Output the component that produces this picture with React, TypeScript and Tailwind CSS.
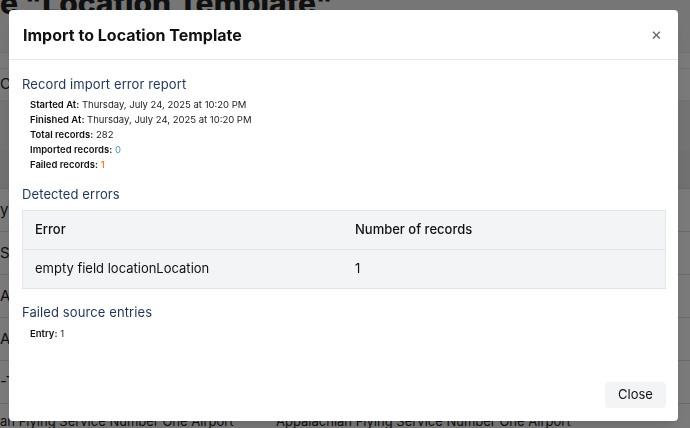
import { FC } from "react";

const font = { fontFamily: "Inter, 'Noto Sans', sans-serif" };

const rows = [
  "y Paper Lane",
  "Storage Unit",
  "Airport Hangar",
  "Airport Tower",
  "-Terminal",
];

const Background: FC = () => (
  <div className="w-[690px] h-[428px] overflow-hidden bg-white text-[#222]">
    {/* heading */}
    <div className="h-[52px] bg-[#f6f6f6] overflow-hidden">
      <h1 className="text-[30px] font-extrabold leading-none whitespace-nowrap -mt-[12px]">e "Location Template"</h1>
    </div>
    <div className="h-[16px] border-t border-[#e6e6e6]"></div>
    <div className="h-[32px] border-t border-[#e6e6e6] flex items-center text-[15px]">Code</div>
    <div className="h-[50px] border-t border-[#ececec] bg-[#f0f0f0]"></div>
    <div className="h-[38px] bg-[#ececec] flex items-center text-[10px] pl-[16px]">▼</div>
    {rows.map((r) => (
      <div key={r} className="h-[43px] border-t border-[#dcdcdc] flex items-center text-[15px] whitespace-nowrap">
        {r}
      </div>
    ))}
    <div className="h-[43px] border-t border-[#dcdcdc] flex items-start pt-[8px] text-[13px] whitespace-nowrap">
      <span className="w-[276px] shrink-0">an Flying Service Number One Airport</span>
      <span className="shrink-0">Appalachian Flying Service Number One Airport</span>
    </div>
  </div>
);

const Detail: FC<{ label: string; value: string; color?: string }> = ({ label, value, color }) => (
  <div className="h-[15px] leading-[15px] whitespace-nowrap">
    <span className="font-semibold text-[#111]">{label}:</span>{" "}
    <span className={color ?? "text-[#222]"}>{value}</span>
  </div>
);

const App: FC = () => {
  return (
    <div className="relative w-[690px] h-[428px] overflow-hidden" style={font}>
      <Background />

      {/* overlay */}
      <div className="fixed inset-0 bg-black/[0.52] pl-[9px] pt-[10px]">
        <div className="w-[669px] h-[411px] bg-white rounded-[4px] flex flex-col shadow-lg">
          {/* header */}
          <div className="h-[50px] shrink-0 border-b border-[#e5e7eb] flex items-center justify-between pl-[14px] pr-[16px]">
            <h2 className="text-[16px] font-bold text-[#111]">Import to Location Template</h2>
            <span className="text-[17px] text-[#666] leading-none">×</span>
          </div>

          {/* body */}
          <div className="flex-1 px-[13px] pt-[15px]">
            <h3 className="text-[13px] text-[#1f3556] leading-[18px] tracking-[0.1px]">Record import error report</h3>
            <div className="pl-[8px] pt-[4px] text-[9.5px]">
              <Detail label="Started At" value="Thursday, July 24, 2025 at 10:20 PM" />
              <Detail label="Finished At" value="Thursday, July 24, 2025 at 10:20 PM" />
              <Detail label="Total records" value="282" />
              <Detail label="Imported records" value="0" color="text-[#4f95ab]" />
              <Detail label="Failed records" value="1" color="text-[#e8832e] font-semibold" />
            </div>

            <h3 className="text-[13px] text-[#1f3556] leading-[18px] tracking-[0.1px] mt-[13px]">Detected errors</h3>
            <div className="mt-[7px] w-[644px] border border-[#e2e5ea] bg-[#f3f4f6] text-[13px] text-[#111]">
              <div className="grid grid-cols-2 h-[39px] items-center border-b border-[#e2e5ea]">
                <div className="pl-[12px] font-medium">Error</div>
                <div className="pl-[11px] font-medium">Number of records</div>
              </div>
              <div className="grid grid-cols-2 h-[38px] items-center">
                <div className="pl-[12px]">empty field locationLocation</div>
                <div className="pl-[11px]">1</div>
              </div>
            </div>

            <h3 className="text-[13px] text-[#1f3556] leading-[18px] tracking-[0.1px] mt-[14px]">Failed source entries</h3>
            <div className="pl-[8px] pt-[5px] text-[9.5px]">
              <Detail label="Entry" value="1" />
            </div>
          </div>

          {/* footer */}
          <div className="flex justify-end px-[12px] pb-[13px]">
            <button className="w-[61px] h-[26px] rounded-[4px] bg-[#f3f4f6] text-[13px] text-[#111]">Close</button>
          </div>
        </div>
      </div>
    </div>
  );
};

export default App;
